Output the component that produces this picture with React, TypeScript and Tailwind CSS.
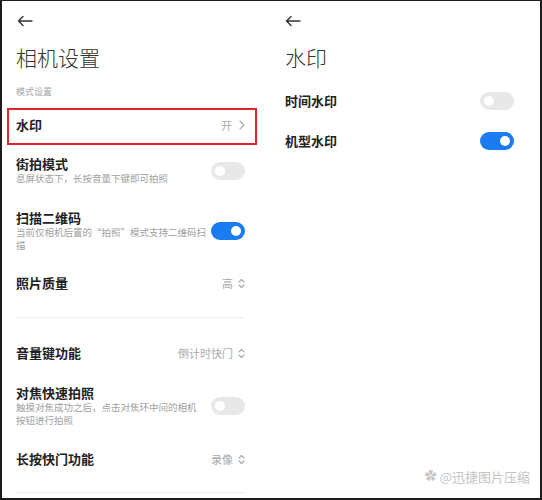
const font = { fontFamily: '"Noto Sans CJK SC", "Noto Sans", sans-serif' }

function BackArrow() {
  return (
    <svg width="16" height="12" viewBox="0 0 16 12" fill="none" stroke="#333" strokeWidth="1.4" strokeLinecap="round" strokeLinejoin="round">
      <path d="M15 6H1.5M6 1.5L1.5 6L6 10.5" />
    </svg>
  )
}

function Toggle({ on }: { on: boolean }) {
  return (
    <div
      className={`w-[34px] h-[18px] rounded-full flex items-center px-[4px] shrink-0 ${
        on ? 'bg-[#1a7cf0] justify-end' : 'bg-[#e8e8e8] justify-start'
      }`}
    >
      <div className="w-[10px] h-[10px] rounded-full bg-white" />
    </div>
  )
}

function UpDown() {
  return (
    <svg width="7" height="11" viewBox="0 0 7 11" fill="none" stroke="#aaa" strokeWidth="1.1" strokeLinecap="round" strokeLinejoin="round">
      <path d="M1 4L3.5 1.5L6 4M1 7L3.5 9.5L6 7" />
    </svg>
  )
}

function Chevron() {
  return (
    <svg width="6" height="10" viewBox="0 0 6 10" fill="none" stroke="#aaa" strokeWidth="1.1" strokeLinecap="round" strokeLinejoin="round">
      <path d="M1 1L5 5L1 9" />
    </svg>
  )
}

function ToggleRow({ title, sub, on, className }: { title: string; sub: string[]; on: boolean; className?: string }) {
  return (
    <div className={`flex items-center justify-between ${className ?? ''}`}>
      <div className="w-[192px]">
        <div className="text-[13px] leading-[15px] font-semibold text-[#222]">{title}</div>
        <div className="mt-[1px]">
          {sub.map(s => (
            <div key={s} className="text-[9.5px] leading-[13px] text-[#a0a0a0] whitespace-nowrap">
              {s}
            </div>
          ))}
        </div>
      </div>
      <Toggle on={on} />
    </div>
  )
}

function SelectRow({ title, value, className }: { title: string; value: string; className?: string }) {
  return (
    <div className={`flex items-center justify-between h-[16px] ${className ?? ''}`}>
      <div className="text-[13px] leading-[16px] font-semibold text-[#222]">{title}</div>
      <div className="flex items-center gap-[5px] text-[11px] text-[#aaa]">
        {value}
        <UpDown />
      </div>
    </div>
  )
}

export default function App() {
  return (
    <div
      style={font}
      className="relative w-[542px] h-[500px] bg-white border-t border-l-2 border-r-2 border-b-2 border-[#1c1c1c] flex overflow-hidden"
    >
      {/* 相机设置 */}
      <div className="w-[268px] h-full pl-[14px] pr-[25px] flex flex-col">
        <div className="h-[39px] flex items-center pl-[1px]">
          <BackArrow />
        </div>
        <div className="h-[36px] flex items-center text-[21px] text-[#333] font-light">相机设置</div>
        <div className="h-[32px] flex items-center text-[9px] text-[#a8a8a8]">模式设置</div>
        <div className="-ml-[9px] -mr-[12px] h-[37px] border-2 border-[#e0242c] flex items-center justify-between pl-[7px] pr-[10px] pb-[3px]">
          <div className="text-[13px] font-semibold text-[#222]">水印</div>
          <div className="flex items-center gap-[7px] text-[11px] text-[#aaa]">
            开
            <Chevron />
          </div>
        </div>
        <ToggleRow className="mt-[11px]" title="街拍模式" sub={['息屏状态下，长按音量下键即可拍照']} on={false} />
        <ToggleRow
          className="mt-[25px]"
          title="扫描二维码"
          sub={['当前仅相机后置的“拍照”模式支持二维码扫', '描']}
          on={true}
        />
        <SelectRow className="mt-[23px]" title="照片质量" value="高" />
        <div className="mt-[26px] h-px bg-[#eeeeee]" />
        <SelectRow className="mt-[27px]" title="音量键功能" value="倒计时快门" />
        <ToggleRow
          className="mt-[24px]"
          title="对焦快速拍照"
          sub={['触摸对焦成功之后，点击对焦环中间的相机', '按钮进行拍照']}
          on={false}
        />
        <SelectRow className="mt-[24px]" title="长按快门功能" value="录像" />
        <div className="mt-[25px] h-px bg-[#eeeeee]" />
      </div>

      {/* 水印 */}
      <div className="flex-1 h-full pl-[15px] pr-[26px] flex flex-col">
        <div className="h-[39px] flex items-center">
          <BackArrow />
        </div>
        <div className="h-[36px] flex items-center text-[21px] text-[#333] font-light">水印</div>
        <div className="mt-[5px] h-[40px] flex items-center justify-between">
          <div className="text-[13px] font-semibold text-[#222]">时间水印</div>
          <Toggle on={false} />
        </div>
        <div className="h-[40px] flex items-center justify-between">
          <div className="text-[13px] font-semibold text-[#222]">机型水印</div>
          <Toggle on={true} />
        </div>
      </div>

      {/* watermark */}
      <div className="absolute right-[10px] bottom-[12px] flex items-center gap-[3px] text-[13px] text-[#c4c4c4]">
        <span className="text-[12px]">✿</span>
        <span>@迅捷图片压缩</span>
      </div>
    </div>
  )
}
